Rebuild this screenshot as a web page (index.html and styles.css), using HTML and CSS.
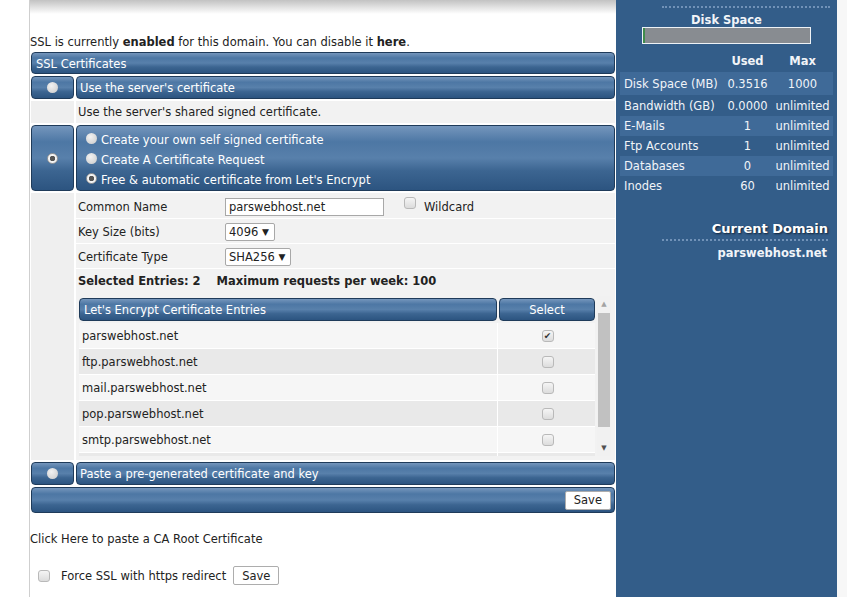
FILE: index.html
```html
<!DOCTYPE html>
<html lang="en">
<head>
    <meta charset="UTF-8">
    <meta name="viewport" content="width=device-width, initial-scale=1.0">
    <title>SSL Certificates</title>
    <link rel="stylesheet" href="styles.css">
</head>
<body>
<div class="page">
    <div class="gutter"></div>

    <div class="main">
        <p class="status">SSL is currently <b>enabled</b> for this domain. You can disable it <b>here</b>.</p>

        <div class="ssl-box">
            <div class="bar title">SSL Certificates</div>

            <div class="opt-row">
                <div class="bar radio-cell"><span class="radio"></span></div>
                <div class="bar opt-label">Use the server's certificate</div>
            </div>
            <div class="desc-row">
                <div class="blank"></div>
                <div class="desc">Use the server's shared signed certificate.</div>
            </div>

            <div class="opt-row">
                <div class="bar radio-cell"><span class="radio on"></span></div>
                <div class="bar opt-label multi">
                    <div class="choice"><span class="radio"></span>Create your own self signed certificate</div>
                    <div class="choice"><span class="radio"></span>Create A Certificate Request</div>
                    <div class="choice"><span class="radio on"></span>Free &amp; automatic certificate from Let's Encrypt</div>
                </div>
            </div>

            <div class="form-area">
                <div class="blank"></div>
                <div class="form-body">
                    <div class="field-row">
                        <span class="lbl">Common Name</span>
                        <input type="text" class="text-input" value="parswebhost.net">
                        <span class="check wildcard"></span>
                        <span>Wildcard</span>
                    </div>
                    <div class="field-row">
                        <span class="lbl">Key Size (bits)</span>
                        <span class="dropdown">4096 <i>&#9660;</i></span>
                    </div>
                    <div class="field-row">
                        <span class="lbl">Certificate Type</span>
                        <span class="dropdown">SHA256 <i>&#9660;</i></span>
                    </div>
                    <div class="summary">
                        <b>Selected Entries: 2</b>
                        <b>Maximum requests per week: 100</b>
                    </div>

                    <div class="entries">
                        <div class="entries-table">
                            <div class="th-row">
                                <div class="bar th">Let's Encrypt Certificate Entries</div>
                                <div class="bar th sel">Select</div>
                            </div>
                            <div class="tr"><div class="td">parswebhost.net</div><div class="td sel"><span class="check on">&#10004;</span></div></div>
                            <div class="tr alt"><div class="td">ftp.parswebhost.net</div><div class="td sel"><span class="check"></span></div></div>
                            <div class="tr"><div class="td">mail.parswebhost.net</div><div class="td sel"><span class="check"></span></div></div>
                            <div class="tr alt"><div class="td">pop.parswebhost.net</div><div class="td sel"><span class="check"></span></div></div>
                            <div class="tr"><div class="td">smtp.parswebhost.net</div><div class="td sel"><span class="check"></span></div></div>
                            <div class="tr alt"><div class="td"></div><div class="td sel"></div></div>
                        </div>
                        <div class="scrollbar">
                            <span class="arrow">&#9650;</span>
                            <span class="thumb"></span>
                            <span class="arrow down">&#9660;</span>
                        </div>
                    </div>
                </div>
            </div>

            <div class="opt-row">
                <div class="bar radio-cell"><span class="radio"></span></div>
                <div class="bar opt-label">Paste a pre-generated certificate and key</div>
            </div>

            <div class="bar save-bar"><button class="btn">Save</button></div>
        </div>

        <p class="ca">Click Here to paste a CA Root Certificate</p>

        <div class="force">
            <span class="check"></span>
            <span>Force SSL with https redirect</span>
            <button class="btn">Save</button>
        </div>
    </div>

    <div class="sidebar">
        <div class="side-cut"></div>
        <div class="side-label">Disk Space</div>
        <div class="meter"><div class="meter-fill"></div></div>

        <table class="stats">
            <tr class="head"><td></td><td>Used</td><td>Max</td></tr>
            <tr class="odd first"><td>Disk Space (MB)</td><td>0.3516</td><td>1000</td></tr>
            <tr class="second"><td>Bandwidth (GB)</td><td>0.0000</td><td>unlimited</td></tr>
            <tr class="odd"><td>E-Mails</td><td>1</td><td>unlimited</td></tr>
            <tr><td>Ftp Accounts</td><td>1</td><td>unlimited</td></tr>
            <tr class="odd"><td>Databases</td><td>0</td><td>unlimited</td></tr>
            <tr><td>Inodes</td><td>60</td><td>unlimited</td></tr>
        </table>

        <div class="side-heading">Current Domain</div>
        <div class="side-domain">parswebhost.net</div>
    </div>

    <div class="edge"></div>
</div>
</body>
</html>
```

FILE: styles.css
```css
body {
    margin: 0;
    font-family: "DejaVu Sans", Verdana, sans-serif;
    font-size: 11.5px;
    color: #222;
    background: #f7f7f7;
}
.page {
    display: flex;
    min-height: 100vh;
}
.gutter {
    width: 29px;
    background: #fff;
    border-right: 1px solid #cfcfcf;
}
.main {
    width: 586px;
    background: linear-gradient(#c2c2c2, #fff 14px) no-repeat, #fff;
}
.status {
    margin: 35px 0 0;
    line-height: 15px;
}
.ssl-box {
    margin: 2px 0 0 1px;
    width: 584px;
    display: flex;
    flex-direction: column;
    gap: 2px;
}
.bar {
    background: linear-gradient(to bottom, #7596bc 0%, #4d77a4 25%, #5880ab 50%, #3c6591 70%, #2c5480 100%);
    border: 1px solid #1f3b5a;
    border-radius: 4px;
    color: #fff;
    box-sizing: border-box;
}
.title {
    height: 22px;
    line-height: 22px;
    padding-left: 4px;
}
.opt-row {
    display: flex;
    gap: 2px;
}
.radio-cell {
    width: 43px;
    display: flex;
    align-items: center;
    justify-content: center;
}
.opt-label {
    flex: 1;
    height: 23px;
    line-height: 22px;
    padding-left: 3px;
}
.opt-label.multi {
    height: 66px;
    padding: 4px 0 0 9px;
}
.choice {
    display: flex;
    align-items: center;
    height: 20px;
    line-height: 20px;
}
.choice .radio {
    margin: -4px 4px 0 0;
}
.radio {
    display: inline-block;
    width: 11px;
    height: 11px;
    border-radius: 50%;
    background: radial-gradient(circle at 40% 35%, #f2f2f2, #c9c9c9);
}
.radio.on {
    box-sizing: border-box;
    border: 1px solid #9a9a9a;
    background: radial-gradient(circle, #555 0, #555 2.5px, #f4f4f4 3px);
}
.desc-row,
.form-area {
    display: flex;
    gap: 2px;
}
.blank {
    width: 43px;
    background: #efefef;
}
.desc {
    flex: 1;
    height: 22px;
    line-height: 23px;
    padding-left: 2px;
    background: #f2f2f2;
}
.form-body {
    flex: 1;
    background: #f2f2f2;
    padding: 1px 0 4px;
}
.field-row {
    display: flex;
    align-items: center;
    box-sizing: border-box;
    height: 25px;
    padding: 1px 0 0 2px;
    border-bottom: 1px solid #fff;
}
.lbl {
    width: 147px;
}
.text-input {
    box-sizing: border-box;
    width: 159px;
    height: 18px;
    border: 1px solid #a8a8a8;
    padding: 0 3px;
    font-family: inherit;
    font-size: 11.5px;
    color: #222;
}
.check {
    display: inline-block;
    box-sizing: border-box;
    width: 12px;
    height: 12px;
    border: 1px solid #b9b9b9;
    border-radius: 3px;
    background: linear-gradient(#f5f5f5, #dcdcdc);
    font-size: 9px;
    line-height: 10px;
    text-align: center;
    color: #333;
}
.wildcard {
    margin: 0 8px 0 20px;
    position: relative;
    top: -4px;
}
.dropdown {
    box-sizing: border-box;
    height: 18px;
    line-height: 16px;
    padding: 0 5px 0 3px;
    border: 1px solid #a8a8a8;
    border-radius: 2px;
    background: #fff;
}
.dropdown i {
    font-style: normal;
    font-size: 9px;
    vertical-align: 1px;
}
.summary {
    height: 22px;
    line-height: 25px;
    padding-left: 2px;
    display: flex;
    gap: 16px;
}
.entries {
    display: flex;
    gap: 2px;
    height: 160px;
    margin: 5px 4px 0 3px;
    overflow: hidden;
}
.entries-table {
    width: 516px;
    padding-top: 2px;
}
.th-row {
    display: flex;
    gap: 2px;
    margin-bottom: 2px;
}
.th {
    height: 23px;
    line-height: 22px;
    padding-left: 4px;
    flex: 1;
}
.th.sel {
    flex: none;
    width: 96px;
    padding: 0;
    text-align: center;
}
.tr {
    display: flex;
    height: 25px;
    line-height: 26px;
    border-bottom: 1px solid #fff;
    background: #f6f6f6;
}
.tr.alt {
    background: #e9e9e9;
}
.td {
    flex: 1;
    padding-left: 3px;
    border-right: 1px solid #fff;
}
.td.sel {
    flex: none;
    width: 97px;
    padding: 0;
    border-right: none;
    display: flex;
    align-items: center;
    justify-content: center;
}
.td .check {
    margin-left: 2px;
}
.scrollbar {
    width: 14px;
    background: #f1f1f1;
    display: flex;
    flex-direction: column;
    align-items: center;
}
.scrollbar .arrow {
    height: 16px;
    line-height: 16px;
    font-size: 7px;
    color: #a3a3a3;
}
.scrollbar .arrow.down {
    margin-top: auto;
    color: #505050;
}
.thumb {
    width: 12px;
    height: 114px;
    margin-top: 1px;
    background: #c1c1c1;
}
.save-bar {
    height: 26px;
    display: flex;
    align-items: center;
    justify-content: flex-end;
    padding-right: 3px;
}
.btn {
    height: 19px;
    padding: 0 8px;
    border: 1px solid #adadad;
    border-radius: 2px;
    background: #fff;
    font-family: inherit;
    font-size: 11.5px;
    color: #222;
}
.ca {
    margin: 19px 0 0;
    line-height: 15px;
}
.force {
    display: flex;
    align-items: center;
    margin-top: 19px;
    padding-left: 8px;
}
.force .check {
    margin-right: 11px;
}
.force .btn {
    margin-left: 7px;
}
.sidebar {
    width: 221px;
    box-sizing: border-box;
    padding: 0 4px;
    background: #335d89;
    color: #f1f4f8;
}
.side-cut {
    height: 6px;
    margin: 0 3px 0 42px;
    border-bottom: 2px dotted #7192b8;
}
.side-label {
    margin-top: 6px;
    text-align: center;
    font-weight: bold;
    line-height: 13px;
}
.meter {
    box-sizing: border-box;
    width: 169px;
    height: 17px;
    margin: 0 auto;
    border: 1px solid #eef2f6;
    background: #888c91;
}
.meter-fill {
    width: 2px;
    height: 100%;
    background: #3f8c4c;
}
.stats {
    width: 213px;
    margin-top: 6px;
    border-collapse: collapse;
}
.stats td {
    padding: 0;
    height: 20px;
    text-align: center;
}
.stats td:first-child {
    width: 96px;
    padding-left: 4px;
    text-align: left;
    white-space: nowrap;
}
.stats td:nth-child(2) {
    width: 55px;
}
.stats td:nth-child(3) {
    padding-right: 3px;
}
.stats .head td {
    height: 22px;
    font-weight: bold;
}
.stats .first td {
    height: 23px;
}
.stats .second td {
    height: 21px;
}
.stats .odd {
    background: #3f6a98;
}
.side-heading {
    margin: 24px 5px 0 42px;
    padding-bottom: 1px;
    border-bottom: 2px dotted #7192b8;
    text-align: right;
    font-size: 13px;
    font-weight: bold;
    line-height: 18px;
    color: #fff;
    text-shadow: 1px 1px 2px #0e2036;
}
.side-domain {
    margin: 5px 6px 0 0;
    text-align: right;
    font-weight: bold;
    line-height: 14px;
}
.edge {
    flex: 1;
    background: #f7f7f7;
}
```
